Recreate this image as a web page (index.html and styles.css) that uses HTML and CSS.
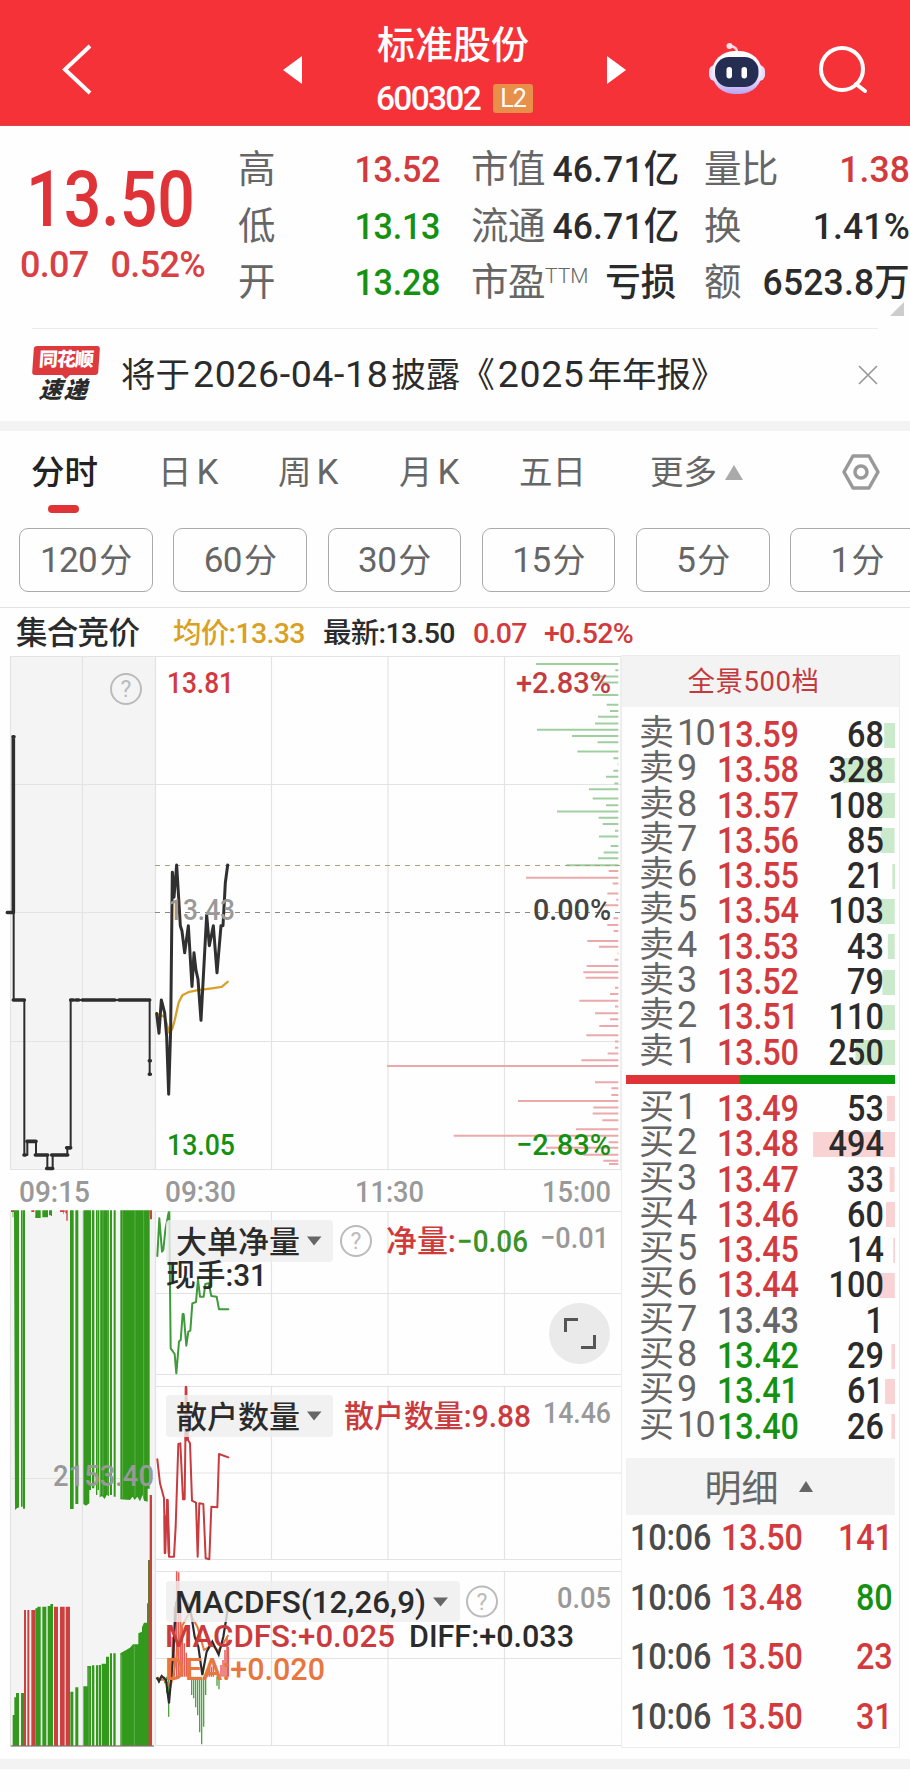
FILE: index.html
```html
<!DOCTYPE html>
<html lang="zh-CN">
<head>
<meta charset="utf-8">
<title>标准股份 600302</title>
<link rel="stylesheet" href="styles.css">
</head>
<body>
<header class="top">
  <svg class="back" viewBox="0 0 34 54"><path d="M30 4L5 27.500L30 51"/></svg>
  <svg class="tri prev" viewBox="0 0 19 28"><path d="M19 0V28L0 14Z"/></svg>
  <div class="stock">
    <h1>标准股份</h1>
    <div class="code"><span>600302</span><b>L2</b></div>
  </div>
  <svg class="tri next" viewBox="0 0 19 28"><path d="M0 0V28L19 14Z"/></svg>
  <svg class="bot" viewBox="0 0 56 52">
    <defs><linearGradient id="helmet" x1="0" y1="0" x2="0" y2="1"><stop offset="0" stop-color="#fff"/><stop offset=".6" stop-color="#eee6ff"/><stop offset="1" stop-color="#b9a2f2"/></linearGradient></defs>
    <path d="M28 9C28 5 25 3.500 21 3" fill="none" stroke="#fbd7e4" stroke-width="2.500" stroke-linecap="round"/>
    <circle cx="20.500" cy="3" r="3" fill="#fde4ec"/>
    <rect x="0" y="22" width="56" height="16" rx="6" fill="#e6dbfd"/>
    <rect x="3" y="8" width="50" height="43" rx="22" fill="url(#helmet)"/>
    <rect x="6" y="14" width="43.500" height="30" rx="14" fill="#252e52"/>
    <rect x="17.500" y="24" width="5.500" height="11.500" rx="2.700" fill="#fff"/><rect x="32.500" y="24" width="5.500" height="11.500" rx="2.700" fill="#fff"/>
  </svg>
  <svg class="search" viewBox="0 0 50 50"><circle cx="23" cy="23" r="21"/><path d="M37 38L46 45"/></svg>
</header>

<section class="quote">
  <div class="last"><strong>13.50</strong><div><span>0.07</span><span>0.52%</span></div></div>
  <dl class="c1"><div><dt>高</dt><dd class="up">13.52</dd></div><div><dt>低</dt><dd class="down">13.13</dd></div><div><dt>开</dt><dd class="down">13.28</dd></div></dl>
  <dl class="c2"><div><dt>市值</dt><dd>46.71亿</dd></div><div><dt>流通</dt><dd>46.71亿</dd></div><div><dt>市盈<sup>TTM</sup></dt><dd>亏损</dd></div></dl>
  <dl class="c3"><div><dt>量比</dt><dd class="up">1.38</dd></div><div><dt>换</dt><dd>1.41%</dd></div><div><dt>额</dt><dd>6523.8万</dd></div></dl>
  <i class="corner"></i>
</section>

<section class="news">
  <div class="brand"><b>同花顺</b><em>速递</em></div>
  <p>将于<span>2026-04-18</span>披露《<span>2025</span>年年报》</p>
  <svg viewBox="0 0 20 20"><path d="M1 1L19 19M19 1L1 19"/></svg>
</section>

<nav class="tabs">
  <a class="on">分时</a><a>日<span>K</span></a><a>周<span>K</span></a><a>月<span>K</span></a><a>五日</a><a>更多<i></i></a>
  <svg viewBox="0 0 38 36"><path d="M11 2H27L36 18L27 34H11L2 18Z"/><circle cx="19" cy="18" r="6"/></svg>
</nav>
<div class="pills"><span>120<i>分</i></span><span>60<i>分</i></span><span>30<i>分</i></span><span>15<i>分</i></span><span>5<i>分</i></span><span>1<i>分</i></span></div>

<div class="legend"><span class="auction">集合竞价</span><span class="avg">均价:13.33</span><span class="now">最新:13.50</span><span class="up">0.07</span><span class="up">+0.52%</span></div>

<main class="main">
<svg class="charts" viewBox="0 652 621 1100">
  <rect class="shade" x="10" y="656" width="145.500" height="513"/>
  <rect class="shade" x="10" y="1211" width="145.500" height="535"/>
  <path class="grid" d="M10.500 656V1169M82.500 656V1169M155.500 656V1169M271.500 656V1169M388 656V1169M504.500 656V1169M621 656V1169M10 656.500H621M10 784.500H621M10 912.500H155M10 1041.500H621M10 1169.500H621"/>
  <path class="grid" d="M10.500 1211V1746M82.500 1211V1746M10 1478.500H155M155.500 1211.500H621M155.500 1293.500H621M155.500 1374.500H621M155.500 1386.500H621M155.500 1473H621M155.500 1559.500H621M155.500 1571.500H621M155.500 1658.500H621M155.500 1745.500H621M155.500 1211V1746M271.500 1211V1374.500M388 1211V1374.500M504.500 1211V1374.500M271.500 1386V1559.500M388 1386V1559.500M504.500 1386V1559.500M271.500 1571V1745.500M388 1571V1745.500M504.500 1571V1745.500"/>
  <g transform="translate(320 640) scale(.33333 .35714)" class="depth">
    <path class="dg" d="M648 67H895M886 85H895M810 102H895M845 119H895M817 154H895M860 181H895M870 199H895M834 215H895M825 234H895M651 251H895M756 269H895M833 286H895M772 312H895M880 331H895M893 348H895M880 366H895M858 383H895M883 402H895M807 418H895M818 444H895M858 463H895M711 480H895M836 498H895M848 515H895M885 534H895M837 550H895M872 577H895M851 595H895M834 611H895M739 631H895"/>
    <path class="dr" d="M866 647H895M618 666H895M878 682H895M862 710H895M889 727H895M850 743H895M880 779H895M862 798H895M881 815H895M802 843H895M837 859H895M893 878H895M884 895H895M800 913H895M790 930H895M797 946H895M885 974H895M870 991H895M778 1010H895M885 1026H895M825 1045H895M870 1062H895M838 1081H895M799 1107H895M885 1124H895M885 1142H895M863 1158H895M784 1177H895M201 1193H895M825 1238H895M874 1255H895M874 1274H895M594 1291H895M820 1309H895M818 1326H895M847 1345H895M768 1370H895M401 1388H895M866 1406H895M678 1422H895M790 1441H895M850 1458H895M867 1467H895"/>
  </g>
  <path d="M155 865.500H621" fill="none" stroke="#aaa174" stroke-dasharray="5 5"/>
  <path d="M155 912.500H621" fill="none" stroke="#888" stroke-dasharray="5 5"/>
  <g transform="translate(0 640) scale(.33333 .35714)" class="lines">
    <path d="M40 271V763H22M41 763V1008H73V1442H82V1404H108V1442H142V1480H158V1442H202V1422H212V1008H449V1216" stroke="#2d2d2d" stroke-width="2"/>
    <path d="M40 271V763H22M40 1008H73M212 1008H220M228 1008H236M247 1008H345M357 1008H449M72 1442H76M81 1404H108M106 1442H143M140 1480H158M155 1442H203M200 1422H212M448 1178H451M448 1216H451M39 271H42" stroke="#2d2d2d" stroke-width="3.600"/>
    <path d="M470 1046L494 1055L508 1100L517 1088L524 1065L536 1015L547 995L565 986L590 981L630 976L665 971L683 957" stroke="#d9a12b" stroke-width="2.300"/>
    <path d="M470 1046L477 1101L484 1008L494 1044L500 1110L506 1272L512 1090L517 650L522 720L530 630L541 800L546 815L554 876L565 800L576 970L582 876L588 925L594 950L603 1065L620 770L628 856L640 800L651 932L663 800L669 800L676 680L683 630" stroke="#303030" stroke-width="3"/>
  </g>
  <g transform="translate(0 1460) scale(.33333)">
    <path fill="#32991c" d="M42 -749H57V142L51 145L45 150ZM63 -749H68V140H63ZM69 -749H75V146H69ZM210 -749H221V147H210ZM226 -749H235V132H226ZM250 -749H273V90H268V130L258 137L250 132ZM276 -749H283V85H276ZM288 -749H292V105H288ZM293 -749H297V90H293ZM299 -749H327V108L320 105L314 117L306 108L299 112ZM330 -749H336V105H330ZM341 -749H347V110H341ZM361 -749H449V86H443V125L432 122L428 105L420 124L412 110L404 120L398 110L390 120L361 118Z"/>
    <path fill="#32991c" d="M38 -749V-728H40V-749ZM106 -749V-726H122V-749ZM127 -749V-728H144V-749ZM147 -749V-734H153V-732H156V-749Z"/>
    <path fill="#cd4040" d="M33 -749H42V-744H33ZM94 -749H103V-744H94ZM180 -749H194V-744H180ZM190 -744H192V-739H190ZM196 -749H203V-718H199V-740H196ZM449 -749H456V-722H450Z"/>
    <path fill="#32991c" d="M38 857V765H43V712H48V699H57V857ZM63 857V699H72V857ZM106 857V445H112V440H122V857ZM127 440H139V857H127ZM143 438H151V432H159V857H143ZM211 695H220V857H211ZM226 682H235V857H226ZM250 857V679H262V618H273V857ZM276 616H283V857H276ZM288 616H294V857H288ZM296 615H303V857H296ZM305 857V611H318V590H327V857ZM330 580H336V857H330ZM340 580H347V857H340ZM361 857V580L390 563L399 553H415V520L426 515V502L432 488H441V430H444V300H447V857Z"/>
    <path fill="#cd4040" d="M72 450H78V857H72ZM82 450H88V857H82ZM94 450H106V857H94ZM162 440H174V857H162ZM180 440H194V857H180ZM197 440H210V857H197ZM446 857V300H449V105H456V857Z"/>
    <path fill="none" stroke="#fff" stroke-opacity=".5" stroke-width="1.300" d="M301 -749V105M309 -749V105M324 -749V105M368 -749V115M405 -749V110M431 -749V110M365 585V857M403 556V857M267 620V857"/>
    <path d="M32 858H462" stroke="#6b5148" stroke-width="3"/>
  </g>
  <g transform="translate(0 1180) scale(.33333)" class="lines">
    <path stroke="#3f9a3a" stroke-width="2" d="M472 228L478 115L486 215L490 210L496 150L506 97H508L510 320L512 505L524 522L529 580L537 485L542 480L548 402H551L559 497L565 455L571 452L577 370L588 366L594 298L600 350H611L616 312L626 310L634 348L650 350L657 388H685"/>
    <path stroke="#c93b3f" stroke-width="2" d="M472 838L480 910L492 955L495 1120L502 960L507 1130H522L527 1040L535 792L541 790L549 958H554L558 620L564 780L570 790L576 962L588 968L593 1130L598 970L610 972L617 1135L628 1138L634 980L652 982L657 822L685 832"/>
    <path stroke="#c93b3f" stroke-width="2.600" d="M558 622V780M495 1010V1118M502 960L507 1120"/>
  </g>
  <g transform="translate(0 1460) scale(.33333)">
    <path stroke="#e75d59" stroke-width="4.500" d="M512 650V600M517 650V530M523 650V440M530 650V334M536 650V337M542 650V440M547 650V500M553 650V550M559 650V578M565 650V595M571 650V630M622 650V635M628 650V625M634 650V620M640 650V600M663 650V615M669 650V600M675 650V570M681 650V530M685 650V560"/>
    <path stroke="#4da340" stroke-width="4" d="M476 650V670M482 650V662M494 650V670M500 650V700M506 650V770M575 650V705M581 650V715M587 650V742M593 650V766M599 650V817M605 650V853M611 650V800M617 650V705M651 650V677M657 650V688"/>
    <path fill="none" stroke="#e8773f" stroke-width="6" d="M470 655L492 660L512 678L523 630L545 500L568 458L592 500L612 570L636 555L655 572L670 550L685 525"/>
    <path fill="none" stroke="#2b2b2b" stroke-width="6.500" d="M470 652L477 664L485 648L498 660L507 730L519 590L528 430L540 400L570 440L584 530L595 560L607 645L620 575L637 545L656 584L670 530L683 450"/>
  </g>
  <g class="chips"><rect x="166" y="1220" width="167" height="42" rx="4"/><rect x="166" y="1395" width="167" height="42" rx="4"/><rect x="166" y="1581" width="294" height="41" rx="4"/></g>
  <path fill="#666" d="M307 1236.500H321.500L314 1245.500ZM307 1411.500H321.500L314 1420.500ZM433 1597.500H448L440.500 1606.500Z"/>
  <g class="help"><circle cx="126" cy="689" r="15"/><text x="126" y="697">?</text><circle cx="356" cy="1241" r="15"/><text x="356" y="1249">?</text><circle cx="482" cy="1601.500" r="15"/><text x="482" y="1609.500">?</text></g>
  <circle cx="579.500" cy="1333.500" r="30.500" fill="#eaeaea"/>
  <path d="M565.500 1332V1319.500H578M581 1347.500H594.500V1335" fill="none" stroke="#555" stroke-width="3"/>
  <g class="num">
    <text x="167" y="692.500" textLength="67" lengthAdjust="spacingAndGlyphs" fill="#d23a3d">13.81</text>
    <text x="168" y="919.500" textLength="67" lengthAdjust="spacingAndGlyphs" fill="#999">13.43</text>
    <text x="167" y="1154.500" textLength="68" lengthAdjust="spacingAndGlyphs" fill="#159112">13.05</text>
    <text x="516" y="692.500" textLength="95" lengthAdjust="spacingAndGlyphs" fill="#c53c40">+2.83%</text>
    <text x="533" y="919.500" textLength="78" lengthAdjust="spacingAndGlyphs" fill="#444">0.00%</text>
    <text x="516" y="1154.500" textLength="95" lengthAdjust="spacingAndGlyphs" fill="#159112">−2.83%</text>
    <g fill="#999">
      <text x="19" y="1202" textLength="71" lengthAdjust="spacingAndGlyphs">09:15</text>
      <text x="165" y="1202" textLength="71" lengthAdjust="spacingAndGlyphs">09:30</text>
      <text x="355" y="1202" textLength="69" lengthAdjust="spacingAndGlyphs">11:30</text>
      <text x="542" y="1202" textLength="69" lengthAdjust="spacingAndGlyphs">15:00</text>
      <text x="540" y="1248" textLength="69" lengthAdjust="spacingAndGlyphs">−0.01</text>
      <text x="543" y="1423" textLength="68" lengthAdjust="spacingAndGlyphs">14.46</text>
      <text x="557" y="1608" textLength="54" lengthAdjust="spacingAndGlyphs">0.05</text>
      <text x="53" y="1485.500" textLength="101" lengthAdjust="spacingAndGlyphs">2153.40</text>
    </g>
  </g>
  <g class="ind">
    <text x="176" y="1253" textLength="124">大单净量</text>
    <text x="166" y="1286" textLength="101" lengthAdjust="spacingAndGlyphs">现手:31</text>
    <text x="386" y="1252" textLength="70" lengthAdjust="spacingAndGlyphs" fill="#d03a3a">净量:</text>
    <text x="457" y="1252" textLength="71" lengthAdjust="spacingAndGlyphs" fill="#3a9228">−0.06</text>
    <text x="176" y="1428" textLength="124">散户数量</text>
    <text x="344" y="1427" textLength="187" lengthAdjust="spacingAndGlyphs" fill="#cb3a3d">散户数量:9.88</text>
    <text x="175" y="1613" textLength="251" lengthAdjust="spacingAndGlyphs">MACDFS(12,26,9)</text>
    <text x="165" y="1646.500" textLength="230" lengthAdjust="spacingAndGlyphs" fill="#cb3a3d">MACDFS:+0.025</text>
    <text x="409" y="1646.500" textLength="165" lengthAdjust="spacingAndGlyphs">DIFF:+0.033</text>
    <text x="165" y="1680" textLength="160" lengthAdjust="spacingAndGlyphs" fill="#e8773f">DEA:+0.020</text>
  </g>
</svg>

<aside class="book">
  <div class="depth-title">全景500档</div>
  <ul class="side sell">
    <li><b>卖<s>10</s></b><span class="up">13.59</span><em style="--w:11px">68</em></li>
    <li><b>卖<s>9</s></b><span class="up">13.58</span><em style="--w:52px">328</em></li>
    <li><b>卖<s>8</s></b><span class="up">13.57</span><em style="--w:17px">108</em></li>
    <li><b>卖<s>7</s></b><span class="up">13.56</span><em style="--w:14px">85</em></li>
    <li><b>卖<s>6</s></b><span class="up">13.55</span><em style="--w:3px">21</em></li>
    <li><b>卖<s>5</s></b><span class="up">13.54</span><em style="--w:16px">103</em></li>
    <li><b>卖<s>4</s></b><span class="up">13.53</span><em style="--w:7px">43</em></li>
    <li><b>卖<s>3</s></b><span class="up">13.52</span><em style="--w:13px">79</em></li>
    <li><b>卖<s>2</s></b><span class="up">13.51</span><em style="--w:17px">110</em></li>
    <li><b>卖<s>1</s></b><span class="up">13.50</span><em style="--w:40px">250</em></li>
  </ul>
  <div class="ratio"><i style="width:42.200%"></i></div>
  <ul class="side buy">
    <li><b>买<s>1</s></b><span class="up">13.49</span><em style="--w:8px">53</em></li>
    <li><b>买<s>2</s></b><span class="up">13.48</span><em style="--w:82px">494</em></li>
    <li><b>买<s>3</s></b><span class="up">13.47</span><em style="--w:5px">33</em></li>
    <li><b>买<s>4</s></b><span class="up">13.46</span><em style="--w:9px">60</em></li>
    <li><b>买<s>5</s></b><span class="up">13.45</span><em style="--w:2px">14</em></li>
    <li><b>买<s>6</s></b><span class="up">13.44</span><em style="--w:16px">100</em></li>
    <li><b>买<s>7</s></b><span class="flat">13.43</span><em style="--w:0px">1</em></li>
    <li><b>买<s>8</s></b><span class="down">13.42</span><em style="--w:4px">29</em></li>
    <li><b>买<s>9</s></b><span class="down">13.41</span><em style="--w:10px">61</em></li>
    <li><b>买<s>10</s></b><span class="down">13.40</span><em style="--w:4px">26</em></li>
  </ul>
  <div class="ticks-title">明细<i></i></div>
  <ul class="ticks">
    <li><time>10:06</time><span class="up">13.50</span><em class="up">141</em></li>
    <li><time>10:06</time><span class="up">13.48</span><em class="down">80</em></li>
    <li><time>10:06</time><span class="up">13.50</span><em class="up">23</em></li>
    <li><time>10:06</time><span class="up">13.50</span><em class="up">31</em></li>
  </ul>
</aside>
</main>
<div class="band"></div>
</body>
</html>
```
FILE: styles.css
```css
* { box-sizing: border-box; margin: 0; padding: 0; }
body { width: 910px; height: 1792px; overflow: hidden; background: #fefefe; color: #2b2b2b; font-family: Roboto, "Noto Sans CJK SC", sans-serif; }
ul { list-style: none; }
i, em { font-style: normal; }
s { text-decoration: none; }
.up { color: #d23a3d; }
.down { color: #159112; }
.flat { color: #666; }

.top { height: 126px; background: #f63239; display: flex; align-items: flex-start; color: #fff; border-bottom: 1px solid #d9484c; }
.top svg { flex: none; }
.back { width: 34px; height: 54px; margin: 42px 0 0 60px; fill: none; stroke: #fff; stroke-width: 4; }
.tri { width: 19px; height: 28px; margin-top: 56px; fill: #fff; }
.prev { margin-left: 189px; }
.stock { width: 156px; margin: 18px 74px 0 75px; }
.stock h1 { font-size: 38px; line-height: 54px; font-weight: 500; white-space: nowrap; }
.code { display: flex; align-items: center; height: 30px; margin-top: 11px; font-size: 33.500px; font-weight: 500; letter-spacing: -1.700px; margin-left: -1px; }
.code b { width: 41px; height: 29px; margin-left: 13px; border-radius: 3px; background: #e8904a; font-size: 25px; line-height: 30px; font-weight: 400; text-align: center; letter-spacing: -1px; }
.bot { width: 56px; height: 52px; margin: 43px 0 0 83px; }
.search { width: 50px; height: 50px; margin: 46px 0 0 54px; fill: none; stroke: #fff; stroke-width: 4; stroke-linecap: round; }

.quote { position: relative; height: 202px; margin: 0 0 0 20px; display: flex; padding-top: 15px; }
.quote .last { width: 218px; color: #d94044; }
.last strong { display: block; margin: 18px 0 0 6px; width: 190px; font-size: 77px; line-height: 82px; font-weight: 500; transform: scaleX(.86); transform-origin: 0 0; color: #e03338; }
.last div { display: flex; gap: 22px; font-size: 36px; line-height: 44px; margin-top: 2px; letter-spacing: -.700px; font-weight: 500; white-space: nowrap; }
.quote dl { flex: none; white-space: nowrap; font-size: 37.500px; }
.quote dl div { display: flex; justify-content: space-between; height: 56.500px; line-height: 56.500px; }
.quote dt { color: #666; letter-spacing: -.500px; }
.quote dd { text-align: right; letter-spacing: -.300px; font-weight: 500; transform: scaleX(.91); transform-origin: 100% 50%; }
.quote sup { font-size: 21px; line-height: 0; vertical-align: 12px; letter-spacing: 0; font-weight: 300; margin-left: 0; }
.c1 { width: 202px; }
.c2 { width: 205px; margin-left: 31px; }
.quote .c2 dd, .quote .c3 dd { letter-spacing: .200px; transform: scaleX(.945); }
.c3 { width: 206px; margin-left: 28px; }
.corner { position: absolute; right: 6px; top: 176px; border: 7px solid transparent; border-right-color: #ccc; border-bottom-color: #ccc; }

.news { height: 93px; margin-left: 32px; width: 846px; border-top: 1px solid #eaeaea; display: flex; align-items: center; }
.brand { width: 66px; height: 58px; margin-right: 23px; text-align: center; transform: skewX(-4deg); }
.brand b { display: block; position: relative; height: 29px; border-radius: 3px; background: #de3a3e; color: #fff; font-size: 19px; line-height: 28px; font-weight: 900; white-space: nowrap; letter-spacing: -1px; }
.brand b::after { content: ""; position: absolute; left: 29px; top: 28px; border: 5px solid transparent; border-bottom: 0; border-top-color: #de3a3e; }
.brand em { display: block; font-size: 23px; line-height: 32px; font-weight: 900; font-style: italic; letter-spacing: 2px; }
.news p { flex: 1; font-size: 34.500px; line-height: 46px; margin-top: -1px; white-space: nowrap; }
.news p span { margin: 0 3px; font-size: 37.500px; letter-spacing: .600px; }
.news svg { width: 20px; height: 20px; stroke: #999; stroke-width: 1.700; }

.tabs { height: 97px; border-top: 10px solid #f3f3f3; padding: 16px 0 0 31px; display: flex; font-size: 33.500px; line-height: 52px; color: #666; white-space: nowrap; }
.tabs a { width: 120px; }
.tabs a:nth-child(1) { width: 127px; }
.tabs a:nth-child(3) { width: 121px; }
.tabs a:nth-child(4) { width: 120px; }
.tabs a:nth-child(5) { width: 131px; }
.tabs a:nth-child(6) { width: 192px; }
.tabs a span { margin-left: 5px; font-size: 35px; }
.tabs .on { color: #222; font-weight: 500; }
.tabs .on::after { content: ""; display: block; width: 31px; height: 8px; margin: 6px 0 0 17px; border-radius: 4px; background: #e03338; }
.tabs a i { display: inline-block; margin-left: 8px; border: 9px solid transparent; border-top: 0; border-bottom: 15px solid #aaa; vertical-align: 4px; }
.tabs svg { flex: none; width: 38px; height: 36px; margin-top: 7px; fill: none; stroke: #999; stroke-width: 3.500; stroke-linejoin: round; }

.pills { height: 90px; display: flex; gap: 20.800px; padding: 10px 0 0 19px; overflow: hidden; border-bottom: 1px solid #e4e4e4; }
.pills span { flex: none; width: 133.500px; height: 64px; border: 1px solid #aaa; border-radius: 9px; text-align: center; font-size: 35px; line-height: 63px; color: #666; letter-spacing: -.600px; }
.pills i { font-size: 33px; margin-left: 2px; }

.legend { height: 44px; padding-left: 16px; display: flex; font-size: 28.500px; line-height: 51px; letter-spacing: -.700px; white-space: nowrap; font-weight: 500; }
.legend .auction { width: 157px; font-size: 31.500px; }
.legend .avg { width: 150px; color: #d9a023; }
.legend .now { width: 150px; }
.legend .up:nth-child(4) { width: 71px; }

.main { display: flex; height: 1107px; }
.charts { flex: none; width: 621px; height: 1100px; }
.charts .shade { fill: #f4f4f4; }
.grid { fill: none; stroke: #e3e3e3; stroke-width: 1.200; }
.depth path { fill: none; stroke-width: 2; vector-effect: non-scaling-stroke; }
.dg { stroke: #9fcf9f; }
.dr { stroke: #eba9aa; }
.lines path { fill: none; stroke-linejoin: round; stroke-linecap: round; vector-effect: non-scaling-stroke; }
.chips rect { fill: #eee; fill-opacity: .8; }
.help circle { fill: none; stroke: #bbb; stroke-width: 2; }
.help text { font-size: 23px; fill: #bbb; text-anchor: middle; }
.num { font-size: 30px; font-weight: 500; }
.ind { font-size: 31px; fill: #2b2b2b; font-weight: 500; }

.book { width: 279px; height: 1093px; border: 1px solid #ededed; margin-top: 3px; }
.depth-title { height: 51px; background: #f3f3f3; text-align: center; font-size: 27.500px; line-height: 51px; color: #c4393d; padding-right: 14px; letter-spacing: .500px; }
.side li { height: 35.300px; display: grid; grid-template-columns: 78px minmax(0, 1fr) 92px; padding: 0 4px 0 17px; line-height: 35px; white-space: nowrap; }
.side { font-size: 36px; }
.side b { font-weight: 400; color: #666; font-size: 35px; line-height: 33px; }
.side s { font-size: 36px; margin-left: 3px; letter-spacing: -1.800px; }
.side span { letter-spacing: -.200px; font-weight: 500; padding-top: 1px; transform: scaleX(.9); transform-origin: 0 50%; }
.side em { text-align: right; padding: 1px 12px 0 0; letter-spacing: .200px; font-weight: 500; transform: scaleX(.9); transform-origin: 100% 50%; background: linear-gradient(var(--c), var(--c)) right center / calc(var(--w) / .9) 25px no-repeat; }
.sell { --c: #cbeacb; padding-top: 10px; }
.buy { --c: #f9d3d4; padding-top: 7px; }
.ratio { height: 9px; margin: 5px 4px 0 4px; background: #089b0b; }
.ratio i { display: block; height: 9px; background: #e03338; }
.ticks-title { height: 57px; margin: 14px 4px 0; background: #f3f3f3; display: flex; align-items: center; justify-content: center; font-size: 37px; color: #666; gap: 20px; padding-right: 4px; }
.ticks-title i { border: 7.500px solid transparent; border-top: 0; border-bottom: 11px solid #666; }
.ticks li { height: 59.700px; display: grid; grid-template-columns: 91px minmax(0, 1fr) auto; padding: 2px 6px 0 8px; line-height: 43px; font-size: 36px; letter-spacing: -.200px; font-weight: 500; }
.ticks time, .ticks span { transform: scaleX(.9); transform-origin: 0 50%; }
.ticks em { transform: scaleX(.9); transform-origin: 100% 50%; }
.ticks time { color: #4a4a4a; }
.band { height: 10px; background: #f3f3f3; }
```
